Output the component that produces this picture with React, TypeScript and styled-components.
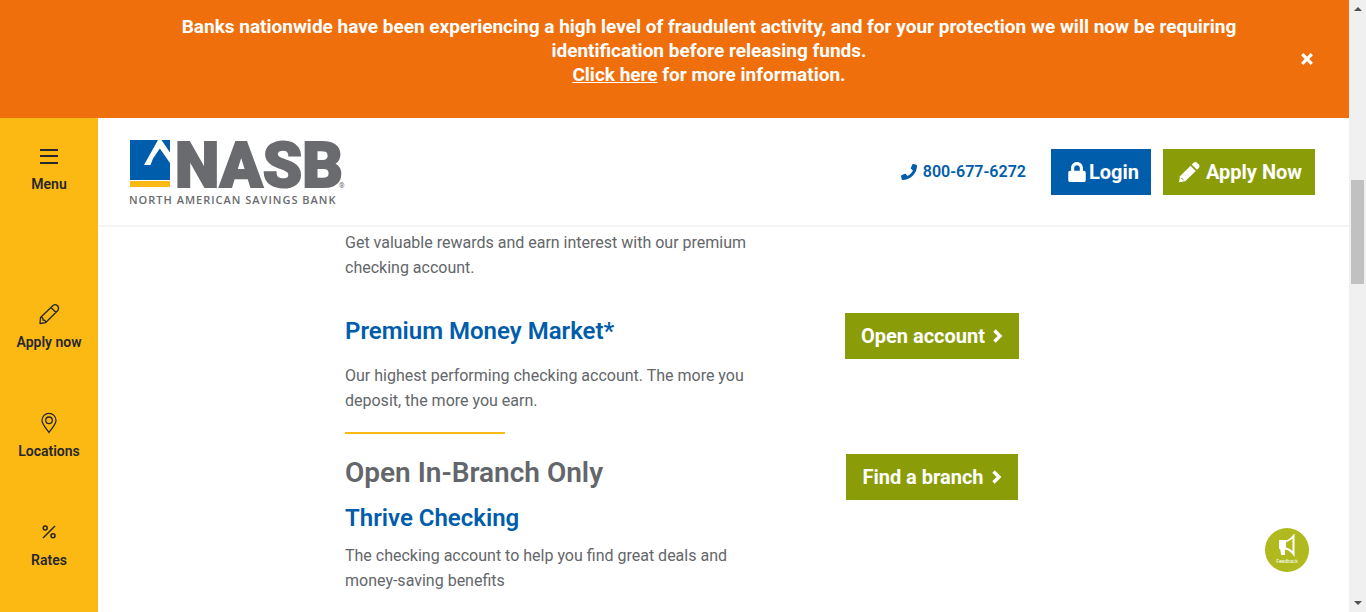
import React from "react";
import styled, { createGlobalStyle } from "styled-components";
import { FaPhone, FaLock } from "react-icons/fa";

const GlobalStyle = createGlobalStyle`
  *, *::before, *::after { box-sizing: border-box; }
  body { margin: 0; font-family: Roboto, "Liberation Sans", sans-serif; color: #63666a; background: #fff; }
  h2, h3, p { margin: 0; }
  a { color: inherit; text-decoration: none; }
  button { font: inherit; color: inherit; border: 0; padding: 0; background: none; cursor: pointer; }
`;

const Screen = styled.div`
  display: flex;
  height: 100vh;
  overflow: hidden;
`;

const Page = styled.div`
  position: relative;
  flex: 1;
  min-width: 0;
  display: flex;
  flex-direction: column;
`;

const Banner = styled.div`
  flex: none;
  display: flex;
  align-items: center;
  min-height: 118px;
  padding: 0 34px 0 150px;
  background: #f06f0d;
  color: #fff;
`;

const BannerText = styled.p`
  flex: 1;
  padding: 0 31px 16px 0;
  font-size: 19px;
  line-height: 24px;
  font-weight: 700;
  text-align: center;
  a { text-decoration: underline; }
`;

const CloseButton = styled.button`
  display: flex;
`;

const Body = styled.div`
  flex: 1;
  min-height: 0;
  display: flex;
`;

const Sidebar = styled.nav`
  flex: none;
  width: 98px;
  display: flex;
  flex-direction: column;
  align-items: center;
  gap: 59px;
  padding-top: 26px;
  background: #fdb913;
  color: #25282a;
`;

const sideItem = `
  display: flex;
  flex-direction: column;
  align-items: center;
  gap: 6px;
  font-size: 14px;
  line-height: 20px;
  font-weight: 600;
`;

const MenuButton = styled.button`
  ${sideItem}
  margin-bottom: 49px;
`;

const SideLink = styled.a`
  ${sideItem}
`;

const SideIcon = styled.svg`
  width: 24px;
  height: 24px;
  fill: none;
  stroke: currentColor;
`;

const Column = styled.div`
  flex: 1;
  min-width: 0;
`;

const Header = styled.header`
  display: flex;
  align-items: center;
  justify-content: space-between;
  min-height: 109px;
  padding: 0 34px 0 31px;
  border-bottom: 2px solid #f5f5f5;
`;

const LogoLink = styled.a`
  display: flex;
  svg { overflow: visible; }
`;

const Actions = styled.div`
  display: flex;
  align-items: center;
  gap: 12px;
`;

const Phone = styled.a`
  display: flex;
  align-items: center;
  gap: 6px;
  margin-right: 13px;
  color: #005dab;
  font-size: 16px;
  font-weight: 600;
`;

const ButtonLink = styled.a<{ $blue?: boolean; $gap?: number; $end?: number }>`
  display: inline-flex;
  align-items: center;
  gap: ${(p) => p.$gap ?? 8}px;
  height: 46px;
  padding: 0 ${(p) => p.$end ?? 16}px 0 16px;
  background: ${(p) => (p.$blue ? "#005dab" : "#8a9d08")};
  color: #fff;
  font-size: 20px;
  font-weight: 700;
  white-space: nowrap;
`;

const Content = styled.main`
  max-width: 757px;
  margin: 0 auto;
  padding-top: 3px;
`;

const Row = styled.section<{ $top?: number }>`
  display: grid;
  grid-template-columns: 417fr 340fr;
  justify-items: start;
  margin-top: ${(p) => p.$top ?? 0}px;
`;

const ActionCell = styled.div`
  justify-self: center;
`;

const SectionTitle = styled.h2`
  margin-bottom: 8px;
  font-size: 28px;
  line-height: 38px;
  font-weight: 600;
`;

const AccountTitle = styled.h3`
  color: #005dab;
  font-size: 24px;
  line-height: 36px;
  font-weight: 600;
`;

const Copy = styled.p<{ $top?: number }>`
  max-width: 417px;
  margin-top: ${(p) => p.$top ?? 0}px;
  font-size: 16px;
  line-height: 25px;
`;

const Rule = styled.hr`
  width: 160px;
  height: 2px;
  margin: 19px 0 0;
  border: 0;
  background: #fdb913;
`;

const Feedback = styled.button`
  position: absolute;
  right: 40px;
  bottom: 40px;
  width: 44px;
  height: 44px;
  display: flex;
  flex-direction: column;
  align-items: center;
  padding-top: 6px;
  border-radius: 50%;
  background: #b0ba1e;
  color: #fff;
  font-size: 5px;
  line-height: 6px;
`;

const ScrollRail = styled.div`
  flex: none;
  width: 17px;
  display: flex;
  flex-direction: column;
  align-items: center;
  justify-content: space-between;
  padding: 7px 0;
  background: #f0f0f0;
`;

const Thumb = styled.div`
  width: 13px;
  height: 104px;
  margin: 169px 0 auto;
  background: #c1c1c1;
`;

const Arrow = styled.i<{ $down?: boolean }>`
  border: 4px solid transparent;
  border-top: ${(p) => (p.$down ? "4px solid #505050" : "0")};
  border-bottom: ${(p) => (p.$down ? "0" : "4px solid #505050")};
`;

function Logo() {
  return (
    <svg width="216" height="68" viewBox="0 0 216 68" role="img" aria-label="NASB North American Savings Bank">
      <path fill="#005dab" d="M1 2h40v40H1z" />
      <path fill="#fdb913" d="M1 43h40v6H1z" />
      <path fill="#fff" d="M29 2h3.500L41 14.500V25L30.800 10.500 24 20.500 21.500 27H15z" />
      <g fill="#6a6b6e">
        <text x="46" y="49" fontFamily="Roboto" fontWeight="900" fontSize="63" stroke="#6a6b6e" strokeWidth="2">NASB</text>
        <text x="0" y="66" fontFamily="Open Sans" fontWeight="600" fontSize="11" letterSpacing="1">NORTH AMERICAN SAVINGS BANK</text>
        <text x="210" y="50" fontFamily="Roboto" fontSize="7">®</text>
      </g>
    </svg>
  );
}

function Chevron() {
  return (
    <svg width="10" height="14" viewBox="0 0 10 14" fill="none" stroke="currentColor" strokeWidth="3.400" aria-hidden="true">
      <path d="M1.500 1.500 7 7 1.500 12.500" />
    </svg>
  );
}

function Pencil() {
  return (
    <svg width="22" height="22" viewBox="0 0 22 22" fill="currentColor" aria-hidden="true">
      <path d="M11.500 4.700 16.800 10 6.200 20.200 0 21.200 1 15.300z" />
      <path d="M12.700 3.500 14.800 1.500q1.500-1.200 3 0l2.200 2.300q1.200 1.500 0 3L18 8.800z" />
      <path d="M2.300 17 4.600 19.300" stroke="#8a9d08" strokeWidth="1" />
    </svg>
  );
}

export default function App() {
  return (
    <Screen>
      <GlobalStyle />
      <Page>
        <Banner role="alert">
          <BannerText>
            Banks nationwide have been experiencing a high level of fraudulent activity, and for your protection we will now be requiring identification before releasing funds.
            <br />
            <a href="#info">Click here</a> for more information.
          </BannerText>
          <CloseButton aria-label="Close">
            <svg width="16" height="16" viewBox="0 0 16 16" stroke="currentColor" strokeWidth="3.200">
              <path d="M3.200 3.200 12.800 12.800M12.800 3.200 3.200 12.800" />
            </svg>
          </CloseButton>
        </Banner>
        <Body>
          <Sidebar>
            <MenuButton>
              <SideIcon viewBox="0 0 24 24" strokeWidth="2"><path d="M3 6h18M3 12h18M3 19h18" /></SideIcon>
              Menu
            </MenuButton>
            <SideLink href="#apply">
              <SideIcon viewBox="0 0 24 24" strokeWidth="1.300" strokeLinejoin="round">
                <path d="M3 21.500 3.500 15.500 16 3.500q2.500-1.800 4.500.3t.3 4.700L8.500 20.700zM14 5.500l5 5M3.500 15.500q3-.3 2.500 2.500q2.700-.2 2.500 2.700" />
              </SideIcon>
              Apply now
            </SideLink>
            <SideLink href="#locations">
              <SideIcon viewBox="0 0 24 24" strokeWidth="1.300">
                <path d="M12 21.500C9 17 5 13.500 5 9.300a7 7 0 0 1 14 0C19 13.500 15 17 12 21.500z" />
                <circle cx="12" cy="9.300" r="3.300" />
              </SideIcon>
              Locations
            </SideLink>
            <SideLink href="#rates">
              <SideIcon viewBox="0 0 24 24" strokeWidth="1.500">
                <path d="M6 18 18 6" />
                <circle cx="8.200" cy="8" r="2" />
                <circle cx="16" cy="15.700" r="2" />
              </SideIcon>
              Rates
            </SideLink>
          </Sidebar>
          <Column>
            <Header>
              <LogoLink href="#home"><Logo /></LogoLink>
              <Actions>
                <Phone href="tel:8006776272"><FaPhone />800-677-6272</Phone>
                <ButtonLink href="#login" $blue $gap={2} $end={12}><FaLock />Login</ButtonLink>
                <ButtonLink href="#apply" $gap={5} $end={13}><Pencil />Apply Now</ButtonLink>
              </Actions>
            </Header>
            <Content>
              <Row>
                <Copy>Get valuable rewards and earn interest with our premium checking account.</Copy>
              </Row>
              <Row $top={33}>
                <div>
                  <AccountTitle>Premium Money Market*</AccountTitle>
                  <Copy $top={14}>Our highest performing checking account. The more you deposit, the more you earn.</Copy>
                  <Rule />
                </div>
                <ActionCell><ButtonLink href="#open">Open account<Chevron /></ButtonLink></ActionCell>
              </Row>
              <Row $top={20}>
                <div>
                  <SectionTitle>Open In-Branch Only</SectionTitle>
                  <AccountTitle>Thrive Checking</AccountTitle>
                  <Copy $top={7}>The checking account to help you find great deals and money-saving benefits</Copy>
                </div>
                <ActionCell><ButtonLink href="#branch">Find a branch<Chevron /></ButtonLink></ActionCell>
              </Row>
            </Content>
          </Column>
        </Body>
        <Feedback>
          <svg width="18" height="24" viewBox="0 0 18 24" fill="none" stroke="#fff" strokeWidth="2">
            <path fill="#fff" d="M2 7h5v7H2zM3 14h3v6H4z" />
            <path d="M7 7.500Q12 6.500 15.500 2v18Q12 15 7 14.500" />
          </svg>
          Feedback
        </Feedback>
      </Page>
      <ScrollRail aria-hidden="true">
        <Arrow />
        <Thumb />
        <Arrow $down />
      </ScrollRail>
    </Screen>
  );
}
